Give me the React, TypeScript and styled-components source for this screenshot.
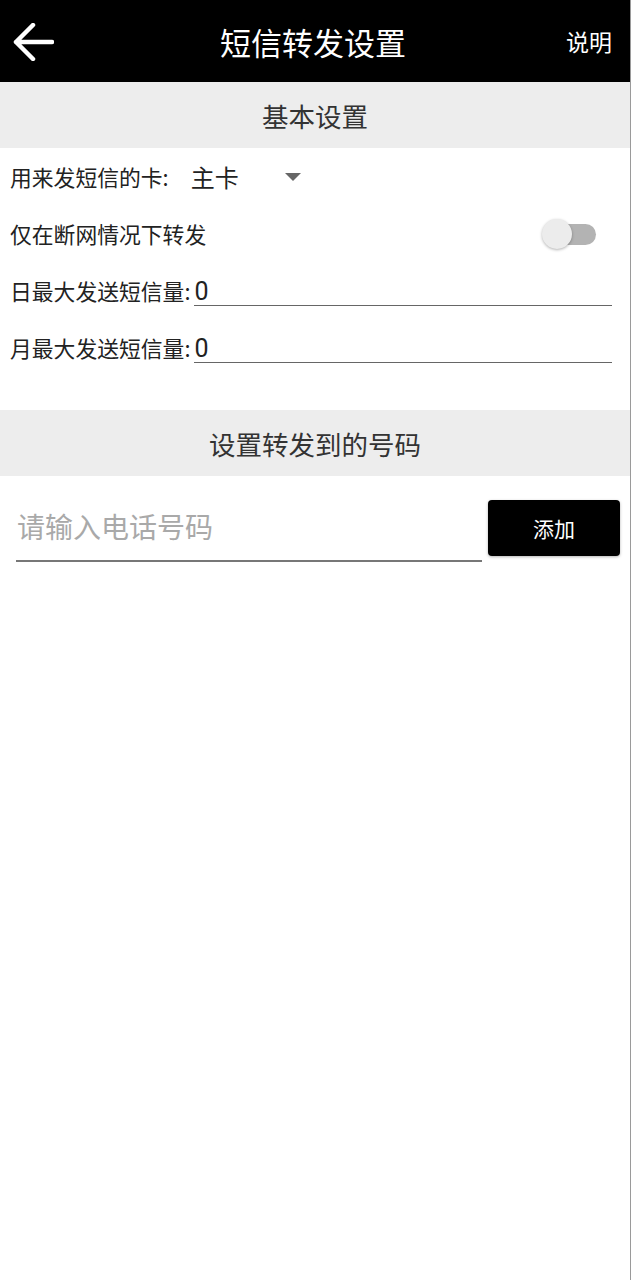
import styled, { createGlobalStyle } from "styled-components";

const GlobalStyle = createGlobalStyle`
  html, body {
    margin: 0;
    padding: 0;
    background: #ffffff;
  }
  body {
    font-family: "Noto Sans CJK SC", "Noto Sans", Roboto, sans-serif;
  }
  * {
    box-sizing: border-box;
  }
`;

export default function App() {
  return (
    <>
      <GlobalStyle />
      <Page>
        <TopBar>
          <BackButton aria-label="返回">
            <svg width="42" height="38" viewBox="0 0 42 38" fill="none">
              <path
                d="M40 19H4M21 2L4 19l17 17"
                stroke="#fff"
                strokeWidth="4.5"
                strokeLinecap="round"
                strokeLinejoin="round"
              />
            </svg>
          </BackButton>
          <Title>短信转发设置</Title>
          <HelpLink>说明</HelpLink>
        </TopBar>

        <SectionHeader>基本设置</SectionHeader>
        <Settings>
          <Row>
            <Label>用来发短信的卡:</Label>
            <Select>
              <SelectValue>主卡</SelectValue>
              <Caret />
            </Select>
          </Row>
          <Row>
            <Label>仅在断网情况下转发</Label>
            <Switch>
              <Track />
              <Thumb />
            </Switch>
          </Row>
          <Row>
            <Label>日最大发送短信量:</Label>
            <NumberField defaultValue="0" />
          </Row>
          <Row>
            <Label>月最大发送短信量:</Label>
            <NumberField defaultValue="0" />
          </Row>
        </Settings>

        <SectionHeader>设置转发到的号码</SectionHeader>
        <AddRow>
          <PhoneField placeholder="请输入电话号码" />
          <AddButton>添加</AddButton>
        </AddRow>
      </Page>
    </>
  );
}

const Page = styled.div`
  min-height: 100vh;
  background: #fff;
  border-right: 1px solid #9a9a9a;
`;

const TopBar = styled.header`
  height: 82px;
  background: #000;
  display: flex;
  align-items: center;
  justify-content: space-between;
  padding: 0 18px 0 12px;
`;

const BackButton = styled.div`
  width: 42px;
  height: 38px;
  display: flex;
  align-items: center;
  margin-top: 2px;
`;

const Title = styled.h1`
  margin: 0 0 0 6px;
  color: #fff;
  font-size: 31px;
  font-weight: 400;
`;

const HelpLink = styled.span`
  color: #fff;
  font-size: 23px;
`;

const SectionHeader = styled.div`
  height: 66px;
  background: #ededed;
  display: flex;
  align-items: center;
  justify-content: center;
  color: #333;
  font-size: 26.5px;
`;

const Settings = styled.div`
  padding: 0 18px 34px 10px;
`;

const Row = styled.div`
  height: 57px;
  display: flex;
  align-items: center;
`;

const Label = styled.span`
  font-size: 21.8px;
  color: #222;
  white-space: nowrap;
`;

const Select = styled.div`
  display: flex;
  align-items: center;
  margin-left: 22px;
`;

const SelectValue = styled.span`
  font-size: 24px;
  color: #222;
`;

const Caret = styled.span`
  width: 0;
  height: 0;
  margin-left: 46px;
  border-left: 8px solid transparent;
  border-right: 8px solid transparent;
  border-top: 8px solid #666;
`;

const Switch = styled.div`
  position: relative;
  margin-left: auto;
  margin-right: 16px;
  width: 54px;
  height: 30px;
`;

const Track = styled.div`
  position: absolute;
  left: 6px;
  right: 0;
  top: 5px;
  height: 21px;
  border-radius: 11px;
  background: #b3b3b3;
`;

const Thumb = styled.div`
  position: absolute;
  left: 0;
  top: 0;
  width: 30px;
  height: 30px;
  border-radius: 50%;
  background: #ececec;
  box-shadow: 0 1px 3px rgba(0, 0, 0, 0.3);
`;

const NumberField = styled.input`
  flex: 1;
  min-width: 0;
  height: 31px;
  margin-left: 4px;
  padding: 2px 0 0;
  border: none;
  border-bottom: 1.5px solid #666;
  outline: none;
  background: transparent;
  font-family: Roboto, "Noto Sans CJK SC", sans-serif;
  font-size: 25px;
  line-height: 28px;
  color: #222;
`;

const AddRow = styled.div`
  display: flex;
  align-items: flex-start;
  padding: 24px 10px 0 16px;
`;

const PhoneField = styled.input`
  flex: 1;
  min-width: 0;
  height: 62px;
  padding: 0 0 8px 1px;
  border: none;
  border-bottom: 2px solid #777;
  outline: none;
  background: transparent;
  font-family: "Noto Sans CJK SC", sans-serif;
  font-size: 28px;
  color: #222;
  &::placeholder {
    color: #a9a9a9;
  }
`;

const AddButton = styled.button`
  width: 132px;
  height: 56px;
  margin-left: 6px;
  border: none;
  border-radius: 4px;
  background: #000;
  color: #fff;
  font-family: "Noto Sans CJK SC", sans-serif;
  font-size: 21px;
  box-shadow: 0 1px 3px rgba(0, 0, 0, 0.3);
`;
